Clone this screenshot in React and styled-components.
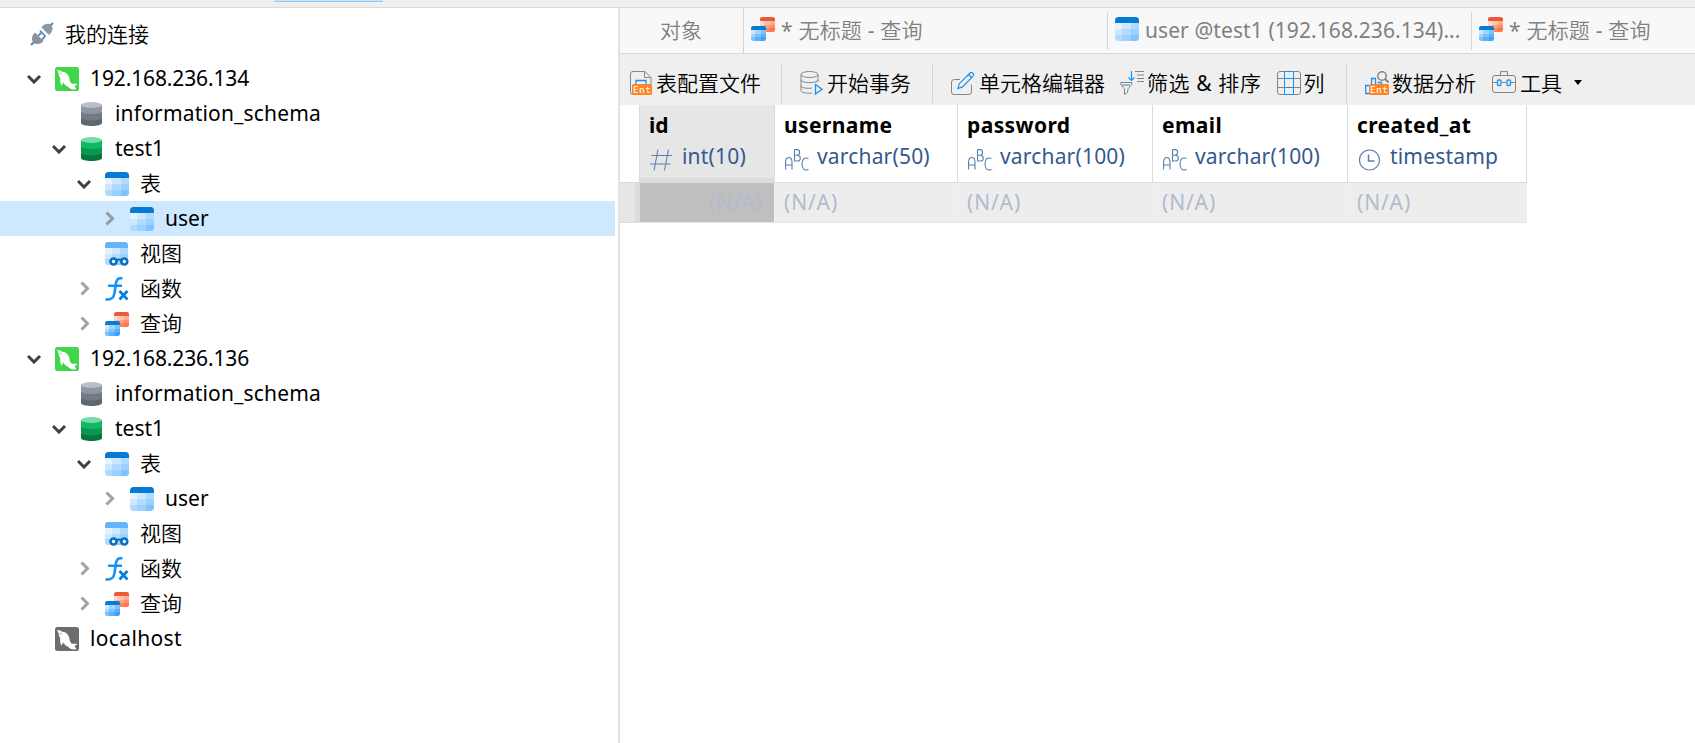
import { useState } from "react"
import styled, { createGlobalStyle, css } from "styled-components"

const GlobalStyle = createGlobalStyle`
    * {
        box-sizing: border-box;
    }
    body {
        margin: 0;
        background: #fff;
        color: #000;
        font-family: "Noto Sans", "Noto Sans CJK SC DemiLight", "Noto Sans CJK SC Light", "Noto Sans CJK SC", sans-serif;
        font-size: 21px;
        overflow: hidden;
    }
`

const Window = styled.div`
    display: flex;
    flex-direction: column;
    height: 743px;
`

const TopStrip = styled.div`
    flex: none;
    height: 8px;
    padding-left: 274px;
    background: #efefef;
    border-bottom: 1px solid #d9d9d9;
`

const ActiveMark = styled.div`
    width: 109px;
    height: 2px;
    background: #cce4f7;
    border-bottom: 1px solid #90c8f6;
`

const Body = styled.div`
    display: flex;
    flex: 1;
    min-height: 0;
`

// ---- connection tree ----

const Sidebar = styled.div`
    flex: none;
    width: 620px;
    border-right: 2px solid #e3e3e3;
`

const RootRow = styled.div`
    display: flex;
    align-items: center;
    height: 53px;
    padding: 0 0 2px 30px;
    gap: 11px;
`

const Row = styled.div`
    display: flex;
    align-items: center;
    width: 615px;
    height: 35px;
    padding-left: ${({ $level }) => 14 + $level * 25}px;
    background: ${({ $selected }) => ($selected ? "#cde8ff" : "transparent")};
    cursor: default;
`

const Toggle = styled.span`
    display: flex;
    justify-content: center;
    width: 41px;
`

const Label = styled.span`
    line-height: 30px;
    white-space: pre;
    letter-spacing: ${({ $spacing = 0 }) => $spacing}px;
`

const RowLabel = styled(Label)`
    margin: 0 0 1px 11px;
`

// ---- right side ----

const Main = styled.div`
    display: flex;
    flex-direction: column;
    flex: 1;
    min-width: 0;
`

const TabBar = styled.div`
    display: flex;
    align-items: center;
    flex: none;
    height: 46px;
    background: #f8f8f8;
    border-bottom: 1px solid #dadada;
    color: #808080;
`

const Tab = styled.div`
    display: flex;
    align-items: center;
    flex: none;
    gap: 6px;
    width: ${({ $width }) => $width}px;
    height: 38px;
    padding: 0 0 3px 7px;
    border-right: 1px solid #d4d4d4;
    &:last-child {
        flex: 1;
        min-width: 0;
        border-right: none;
    }
    ${({ $home }) => $home && css`
        justify-content: center;
        height: 45px;
        padding: 0 1px 2px 0;
    `}
`

// tab text sits slightly below the centre of its icon
const TabLabel = styled(Label)`
    padding-top: 2px;
`

const ToolBar = styled.div`
    display: flex;
    align-items: center;
    flex: none;
    height: 51px;
    padding: 7px 0 1px;
    background: #efefef;
`

const ToolGroup = styled.div`
    display: flex;
    align-items: center;
    height: 40px;
    width: ${({ $width }) => $width}px;
    padding-left: ${({ $pad }) => $pad}px;
    gap: ${({ $gap = 0 }) => $gap}px;
    border-right: ${({ $last }) => ($last ? "none" : "1px solid #d4d4d4")};
`

const Tool = styled.div`
    display: flex;
    align-items: center;
    gap: ${({ $gap = 3 }) => $gap}px;
`

const Caret = styled.span`
    margin-left: 8px;
    border: 4px solid transparent;
    border-top: 5px solid #000;
    border-bottom: 0;
`

const Grid = styled.div`
    display: grid;
    grid-template-columns: 20px 135px 183px 195px 195px 179px;
    grid-template-rows: 78px 40px;
`

const HeadCell = styled.div`
    padding: 5px 0 0 9px;
    border-right: 1px solid #dadada;
    border-bottom: 1px solid #dadada;
    ${({ $current }) => $current && css`
        background: #e6e6e6;
        box-shadow: inset 0 -4px #dcdcdc;
    `}
`

const ColumnName = styled(Label)`
    display: block;
    font-weight: 700;
`

const ColumnType = styled.div`
    display: flex;
    gap: 8px;
    padding: 1px 0 0 1px;
    color: #34598e;
    svg {
        margin-top: 8px;
    }
`

const Cell = styled.div`
    padding: 4px 11px 0 9px;
    background: ${({ $current }) => ($current ? "#bfbfbf" : "#ededed")};
    border-right: 1px solid #f1f1f1;
    border-bottom: 1px solid #e3e3e3;
    color: #b3bad0;
    text-align: ${({ $current }) => ($current ? "right" : "left")};
`

const Gutter = styled.div`
    background: #e6e6e6;
    border-right: 5px solid #dcdcdc;
    border-bottom: 1px solid #dcdcdc;
`

// ---- icons ----

const Svg = styled.svg.attrs({ viewBox: "0 0 24 24" })`
    flex: none;
    width: 24px;
    height: 24px;
    fill: none;
`

const PlugIcon = () => (
    <Svg>
        <path d="M1 23l5-5M19 5l4-4" stroke="#5d8db5" strokeWidth="2.200" />
        <path d="M8 14l3-3M12 17.500l3-3M10 8.500l5.500 6" stroke="#5d8db5" strokeWidth="1.800" />
        <path d="M5 10.500L13.500 19C11 22.500 6 23 3.500 20.500S1.500 13.500 5 10.500z" fill="#8793a0" />
        <path d="M11.500 5.500C13.500 1.500 18.500.8 21 3S23 10 19 13z" fill="#8c98a4" />
    </Svg>
)

const ChevronDown = () => (
    <svg width="15" height="10" viewBox="0 0 15 10" fill="none">
        <path d="M1 2l6 6 6-6" stroke="#404040" strokeWidth="3" />
    </svg>
)

const ChevronRight = () => (
    <svg width="10" height="15" viewBox="0 0 10 15" fill="none">
        <path d="M1.500 1.500l6 6-6 6" stroke="#7a7a7a" strokeOpacity=".7" strokeWidth="3" />
    </svg>
)

const ServerIcon = ({ off }) => (
    <Svg>
        <rect width="24" height="24" rx="2.500" fill={off ? "#6d6d6d" : "#40d64a"} />
        <path d="M2 3C4.500 3 6 3.800 7.200 4.800 10.500 4.500 14 8 14.500 12c.2 2 .8 3.300 2 4.500 1.500.4 3.500.1 6 .5l-3 2.200 2 2.800c-3 1.300-6.500.3-8.300-2.200-2.400-1-4-2.300-5-4.500l-1.400 3.200C5.200 16.500 4.800 14 5.300 11.500 4.200 9.500 3.800 8 3.600 6.300z" fill="#fff" />
        <circle cx="6" cy="6.700" r=".7" fill={off ? "#6d6d6d" : "#40d64a"} />
    </Svg>
)

const DatabaseIcon = ({ off }) => {
    const [top, a, b, c] = off
        ? ["#b9bfc8", "#8e97a1", "#717b85", "#5d6770"]
        : ["#77dcab", "#11b865", "#08974f", "#087440"]
    return (
        <Svg>
            <path d="M1 16h21v5c0 4-21 4-21 0z" fill={c} />
            <path d="M1 10h21v5.500c0 4-21 4-21 0z" fill={b} />
            <path d="M1 3h21v6c0 4-21 4-21 0z" fill={a} />
            <ellipse cx="11.500" cy="3" rx="10.500" ry="3" fill={top} />
        </Svg>
    )
}

const tableShades = ["#e6f3ff", "#cfe8ff", "#b0daff", "#cfe8ff", "#b0daff", "#9bd0ff", "#b0daff", "#9bd0ff", "#80c4ff"]
const redShades = ["#ffd8cc", "#ffc3b1", "#ffaa90", "#ffc3b1", "#ffa184", "#ff8d69", "#ff9b7a", "#ff8259", "#ff754a"]
const blueShades = ["#cfe8ff", "#a5d5ff", "#7cc2ff", "#a5d5ff", "#7cc2ff", "#59b0fc", "#7cc2ff", "#59b0fc", "#3ba2f8"]

// small spreadsheet with a coloured title band, drawn on a 24 unit square
const Sheet = ({ id, head, shades }) => (
    <>
        <clipPath id={id}><rect width="24" height="24" rx="3.500" /></clipPath>
        <g clipPath={`url(#${id})`} shapeRendering="crispEdges">
            {shades.map((fill, i) => (
                <rect key={i} x={[0, 7, 16][i % 3]} y={[6, 12, 18][Math.floor(i / 3)]} width="9" height="6" fill={fill} />
            ))}
            <rect width="24" height="6" fill={head} />
        </g>
    </>
)

const TableIcon = () => (
    <Svg><Sheet id="sheet" head="#077bd3" shades={tableShades} /></Svg>
)

const ViewIcon = () => (
    <Svg>
        <g transform="scale(.96)"><Sheet id="view" head="#64b4fb" shades={tableShades} /></g>
        <path d="M11 18.500q3.500-2 6 0" stroke="#0670c2" strokeWidth="2" />
        <circle cx="8.500" cy="19.500" r="3" fill="#fff" stroke="#0670c2" strokeWidth="2.600" />
        <circle cx="19.300" cy="19.500" r="3" fill="#fff" stroke="#0670c2" strokeWidth="2.600" />
    </Svg>
)

const FunctionIcon = () => (
    <Svg stroke="#1593f5">
        <path d="M17.500 1.300c-4-.6-5.700.7-6.500 4.700L9.500 16c-.8 5-3 7-9 6.500M3 8.700h14" strokeWidth="2.600" />
        <path d="M14.500 14l8 8.500M22.500 14l-8 8.500" stroke="#087fdc" strokeWidth="2.700" />
    </Svg>
)

const QueryIcon = () => (
    <Svg>
        <g transform="translate(9 0) scale(.625)"><Sheet id="qr" head="#ea5b35" shades={redShades} /></g>
        <g transform="translate(0 9) scale(.625)"><Sheet id="qb" head="#077bd3" shades={blueShades} /></g>
    </Svg>
)

const EntText = styled.text`
    fill: #fff;
    font: 9.5px "DejaVu Sans Mono", monospace;
    letter-spacing: 0.4px;
`

const EntBadge = ({ x }) => (
    <>
        <rect x={x} y="13" width="20" height="11" rx="1.500" fill="#ff8426" />
        <EntText x={x + 1} y="22">Ent</EntText>
    </>
)

const ProfileIcon = () => (
    <Svg>
        <path d="M2.500 23.500Q.5 23.500.5 21V3Q.5.5 3 .5h12l6 6V13M14.500.5v6h6" stroke="#858585" />
        <path d="M6 13v-3.500h10V13" stroke="#1593f5" strokeWidth="1.300" />
        <EntBadge x={2} />
    </Svg>
)

const TransactionIcon = () => (
    <Svg stroke="#858585">
        <ellipse cx="9.500" cy="3.500" rx="8.500" ry="3" />
        <path d="M1 3.500v16c0 2 5 3.200 11 2.500M18 3.500V11M1 9c0 3.500 17 3.500 17 0M1 14.500c0 2.500 6 3.300 11 2.500" />
        <path d="M15.500 13.500v9.500l6.500-4.800z" stroke="#1593f5" strokeWidth="1.300" />
    </Svg>
)

const EditIcon = () => (
    <Svg>
        <path d="M9 8.500H3.500Q.5 8.500.5 11v10q0 2.500 2.500 2.500h15q2.500 0 2.500-2.500v-7.500" stroke="#858585" />
        <path d="M7 17.500l1.300-4.800L19 2q1.200-1.200 2.500 0l.6.600q1.200 1.200 0 2.500L11.500 15.900zM17.500 3.500l3 3" stroke="#1593f5" strokeWidth="1.200" />
    </Svg>
)

const FilterIcon = () => (
    <Svg stroke="#858585">
        <path d="M.8 11.500h11v2l-4 4.500V21l-3.300 2.500V18L.8 13.500zM15 .5h9M17 4h7M17 7.500h7M17 10.500h7" />
        <path d="M11.500 0v9.500M8.500 6.500l3 3 3-3M2 14h8" stroke="#1593f5" strokeWidth="1.200" />
    </Svg>
)

const ColumnsIcon = () => (
    <Svg>
        <path d="M7.500.5v23M16.500.5v23M7.500.5h9M7.500 7.500h9M7.500 16.500h9M7.500 23.500h9" stroke="#1593f5" />
        <path d="M7.500.5H3Q.5.5.5 3v18q0 2.500 2.500 2.500h4.500M16.500.5H21q2.500 0 2.500 2.500v18q0 2.500-2.500 2.500h-4.500M.5 7.500h7M.5 16.500h7M16.500 7.500h7M16.500 16.500h7" stroke="#858585" />
    </Svg>
)

const AnalysisIcon = () => (
    <Svg>
        <path d="M4 22.500H.7v-8H4M6.500 13V7.500h4V13M12.500 11.500h4V13" stroke="#1593f5" strokeWidth="1.300" />
        <circle cx="17" cy="5" r="4.200" stroke="#858585" strokeWidth="1.500" />
        <path d="M20 8l3.500 3.500" stroke="#858585" strokeWidth="2" />
        <EntBadge x={4} />
    </Svg>
)

const ToolboxIcon = () => (
    <Svg stroke="#858585">
        <path d="M8.500 4V.6h7V4M.5 11.500H5M10 11.500h4M19 11.500h4.500" />
        <rect x=".5" y="4.500" width="23" height="17" rx="2.500" />
        <rect x="5.500" y="9" width="3.500" height="5.500" rx="1" stroke="#1593f5" strokeWidth="1.300" />
        <rect x="15" y="9" width="3.500" height="5.500" rx="1" stroke="#1593f5" strokeWidth="1.300" />
    </Svg>
)

const NumberIcon = () => (
    <Svg stroke="#5a80ad" strokeWidth="1.100">
        <path d="M8 .5l-4 21M18.500.5l-4 21M1.500 6.500h20.500M0 15h20.500" />
    </Svg>
)

const TextIcon = () => (
    <Svg stroke="#5a80ad" strokeWidth="1.100">
        <path d="M.6 20.500v-8Q1 8.500 3.800 8.500T7 12.500v8M.6 16h6.400M9.500.600V12h3q2.800 0 2.800-2.800T12.500 6.200h-3M9.500.6h2.500q2.600 0 2.600 2.700t-2.600 2.900M23.500 9.500c-4-1.600-6.500.5-6.500 5.500s2.500 7 6.500 5.500" />
    </Svg>
)

const ClockIcon = () => (
    <Svg stroke="#5a80ad" strokeWidth="1.200">
        <circle cx="11.500" cy="11" r="10" />
        <path d="M10.500 5.500v6.500h6" strokeWidth="1.500" />
    </Svg>
)

// ---- data ----

const serverRows = (host, key) => [
    { key: key + "host", level: 0, open: true, icon: <ServerIcon />, label: host, spacing: -0.13 },
    { key: key + "schema", level: 1, icon: <DatabaseIcon off />, label: "information_schema", spacing: 0.18 },
    { key: key + "test1", level: 1, open: true, icon: <DatabaseIcon />, label: "test1" },
    { key: key + "tables", level: 2, open: true, icon: <TableIcon />, label: "表" },
    { key: key + "user", level: 3, open: false, icon: <TableIcon />, label: "user" },
    { key: key + "views", level: 2, icon: <ViewIcon />, label: "视图" },
    { key: key + "functions", level: 2, open: false, icon: <FunctionIcon />, label: "函数" },
    { key: key + "queries", level: 2, open: false, icon: <QueryIcon />, label: "查询" },
]

const rows = [
    ...serverRows("192.168.236.134", "a-"),
    ...serverRows("192.168.236.136", "b-"),
    { key: "localhost", level: 0, icon: <ServerIcon off />, label: "localhost", spacing: 0.35 },
]

const columns = [
    { name: "id", type: "int(10)", icon: <NumberIcon /> },
    { name: "username", type: "varchar(50)", icon: <TextIcon /> },
    { name: "password", type: "varchar(100)", icon: <TextIcon /> },
    { name: "email", type: "varchar(100)", icon: <TextIcon /> },
    { name: "created_at", type: "timestamp", icon: <ClockIcon /> },
]

const Tree = () => {
    const [selected, setSelected] = useState("a-user")

    return (
        <Sidebar>
            <RootRow><PlugIcon /><Label>我的连接</Label></RootRow>
            {rows.map(({ key, level, open, icon, label, spacing }) => (
                <Row key={key} $level={level} $selected={key === selected} onClick={() => setSelected(key)}>
                    <Toggle>
                        {open === true && <ChevronDown />}
                        {open === false && <ChevronRight />}
                    </Toggle>
                    {icon}
                    <RowLabel $spacing={spacing}>{label}</RowLabel>
                </Row>
            ))}
        </Sidebar>
    )
}

const App = () => (
    <>
        <GlobalStyle />
        <Window>
            <TopStrip><ActiveMark /></TopStrip>
            <Body>
                <Tree />
                <Main>
                    <TabBar>
                        <Tab $home $width={124}><Label>对象</Label></Tab>
                        <Tab $width={364}><QueryIcon /><TabLabel $spacing={0.2}>* 无标题 - 查询</TabLabel></Tab>
                        <Tab $width={364}><TableIcon /><TabLabel $spacing={0.08}>user @test1 (192.168.236.134)...</TabLabel></Tab>
                        <Tab><QueryIcon /><TabLabel $spacing={0.2}>* 无标题 - 查询</TabLabel></Tab>
                    </TabBar>
                    <ToolBar>
                        <ToolGroup $width={162} $pad={10}>
                            <Tool $gap={2}><ProfileIcon /><Label>表配置文件</Label></Tool>
                        </ToolGroup>
                        <ToolGroup $width={151} $pad={18}>
                            <Tool><TransactionIcon /><Label>开始事务</Label></Tool>
                        </ToolGroup>
                        <ToolGroup $width={414} $pad={18} $gap={15}>
                            <Tool $gap={4}><EditIcon /><Label>单元格编辑器</Label></Tool>
                            <Tool><FilterIcon /><Label $spacing={0.6}>筛选 & 排序</Label></Tool>
                            <Tool><ColumnsIcon /><Label>列</Label></Tool>
                        </ToolGroup>
                        <ToolGroup $last $width={300} $pad={18} $gap={16}>
                            <Tool><AnalysisIcon /><Label>数据分析</Label></Tool>
                            <Tool $gap={4}><ToolboxIcon /><Label>工具</Label><Caret /></Tool>
                        </ToolGroup>
                    </ToolBar>
                    <Grid>
                        <HeadCell />
                        {columns.map(({ name, type, icon }, i) => (
                            <HeadCell key={name} $current={i === 0}>
                                <ColumnName $spacing={i === 0 ? 0 : 0.4}>{name}</ColumnName>
                                <ColumnType>{icon}<Label $spacing={0.18}>{type}</Label></ColumnType>
                            </HeadCell>
                        ))}
                        <Gutter />
                        {columns.map(({ name }, i) => (
                            <Cell key={name} $current={i === 0}><Label $spacing={0.85}>(N/A)</Label></Cell>
                        ))}
                    </Grid>
                </Main>
            </Body>
        </Window>
    </>
)

export default App
